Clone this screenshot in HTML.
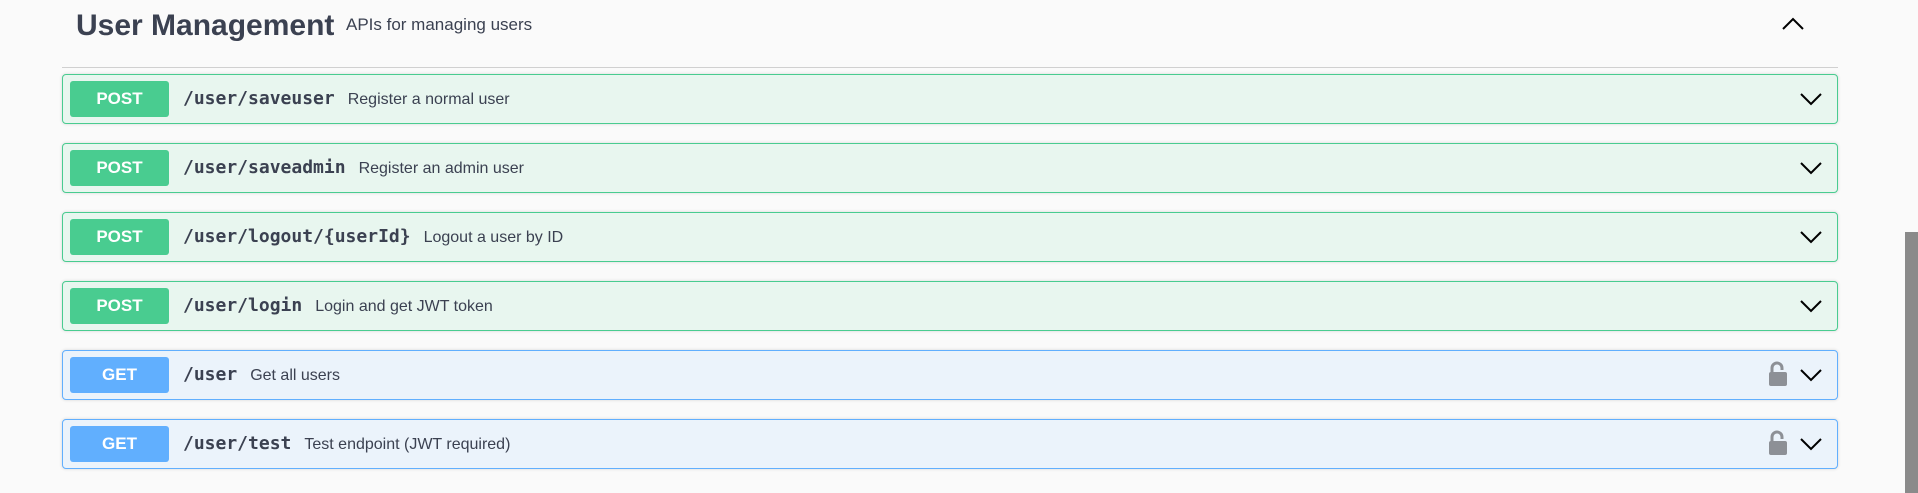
<!DOCTYPE html>
<html><head><meta charset="utf-8"><style>
body{margin:0;width:1918px;height:493px;background:#fafafa;font-family:"Liberation Sans",sans-serif;position:relative;overflow:hidden}
.h{position:absolute;left:76px;top:7px;font-size:30px;font-weight:bold;color:#3b4151;line-height:38px}
.hd{position:absolute;left:346px;top:15px;font-size:17px;color:#3b4151}
.up{position:absolute;left:1782px;top:17px}
.div{position:absolute;left:62px;top:67px;width:1776px;height:1px;background:#d0d0d0}
.op{position:absolute;left:62px;width:1774px;height:48px;border:1px solid #49cc90;background:#e8f6ef;border-radius:4px;box-shadow:0 0 3px rgba(0,0,0,.15)}
.op.g{border-color:#61affe;background:#ebf3fb}
.b{position:absolute;left:7px;top:6px;width:99px;height:36px;border-radius:3px;background:#49cc90;color:#fff;font-weight:bold;font-size:17px;text-align:center;line-height:36px}
.g .b{background:#61affe}
.p{position:absolute;left:120px;top:13px;font-family:"DejaVu Sans Mono","Liberation Mono",monospace;font-weight:bold;font-size:18px;color:#3b4151}
.d{font-family:"Liberation Sans",sans-serif;font-weight:normal;font-size:16px;margin-left:13px}
.ch{position:absolute;left:1737px;top:17px}
.lk{position:absolute;left:1705px;top:10px}
.sb{position:absolute;left:1905px;top:232px;width:13px;height:261px;background:#8a8a8a}
</style></head><body>
<div class="h">User Management</div><div class="hd">APIs for managing users</div>
<svg class="up" width="22" height="14"><path d="M1 12L11 2L21 12" stroke="#000" stroke-width="2" fill="none"/></svg>
<div class="div"></div>

<div class="op" style="top:74px"><div class="b">POST</div><div class="p">/user/saveuser<span class="d">Register a normal user</span></div><svg class="ch" width="22" height="14"><path d="M1 2L11 12L21 2" stroke="#000" stroke-width="2" fill="none"/></svg></div>
<div class="op" style="top:143px"><div class="b">POST</div><div class="p">/user/saveadmin<span class="d">Register an admin user</span></div><svg class="ch" width="22" height="14"><path d="M1 2L11 12L21 2" stroke="#000" stroke-width="2" fill="none"/></svg></div>
<div class="op" style="top:212px"><div class="b">POST</div><div class="p">/user/logout/{userId}<span class="d">Logout a user by ID</span></div><svg class="ch" width="22" height="14"><path d="M1 2L11 12L21 2" stroke="#000" stroke-width="2" fill="none"/></svg></div>
<div class="op" style="top:281px"><div class="b">POST</div><div class="p">/user/login<span class="d">Login and get JWT token</span></div><svg class="ch" width="22" height="14"><path d="M1 2L11 12L21 2" stroke="#000" stroke-width="2" fill="none"/></svg></div>
<div class="op g" style="top:350px"><div class="b">GET</div><div class="p">/user<span class="d">Get all users</span></div><svg class="lk" width="20" height="26"><path d="M4 12V7a5 5 0 0 1 10 0v2" stroke="#8d9096" stroke-width="3" fill="none"/><rect x="1" y="11" width="18" height="14" rx="2" fill="#8d9096"/></svg><svg class="ch" width="22" height="14"><path d="M1 2L11 12L21 2" stroke="#000" stroke-width="2" fill="none"/></svg></div>
<div class="op g" style="top:419px"><div class="b">GET</div><div class="p">/user/test<span class="d">Test endpoint (JWT required)</span></div><svg class="lk" width="20" height="26"><path d="M4 12V7a5 5 0 0 1 10 0v2" stroke="#8d9096" stroke-width="3" fill="none"/><rect x="1" y="11" width="18" height="14" rx="2" fill="#8d9096"/></svg><svg class="ch" width="22" height="14"><path d="M1 2L11 12L21 2" stroke="#000" stroke-width="2" fill="none"/></svg></div>
<div class="sb"></div>
</body></html>
